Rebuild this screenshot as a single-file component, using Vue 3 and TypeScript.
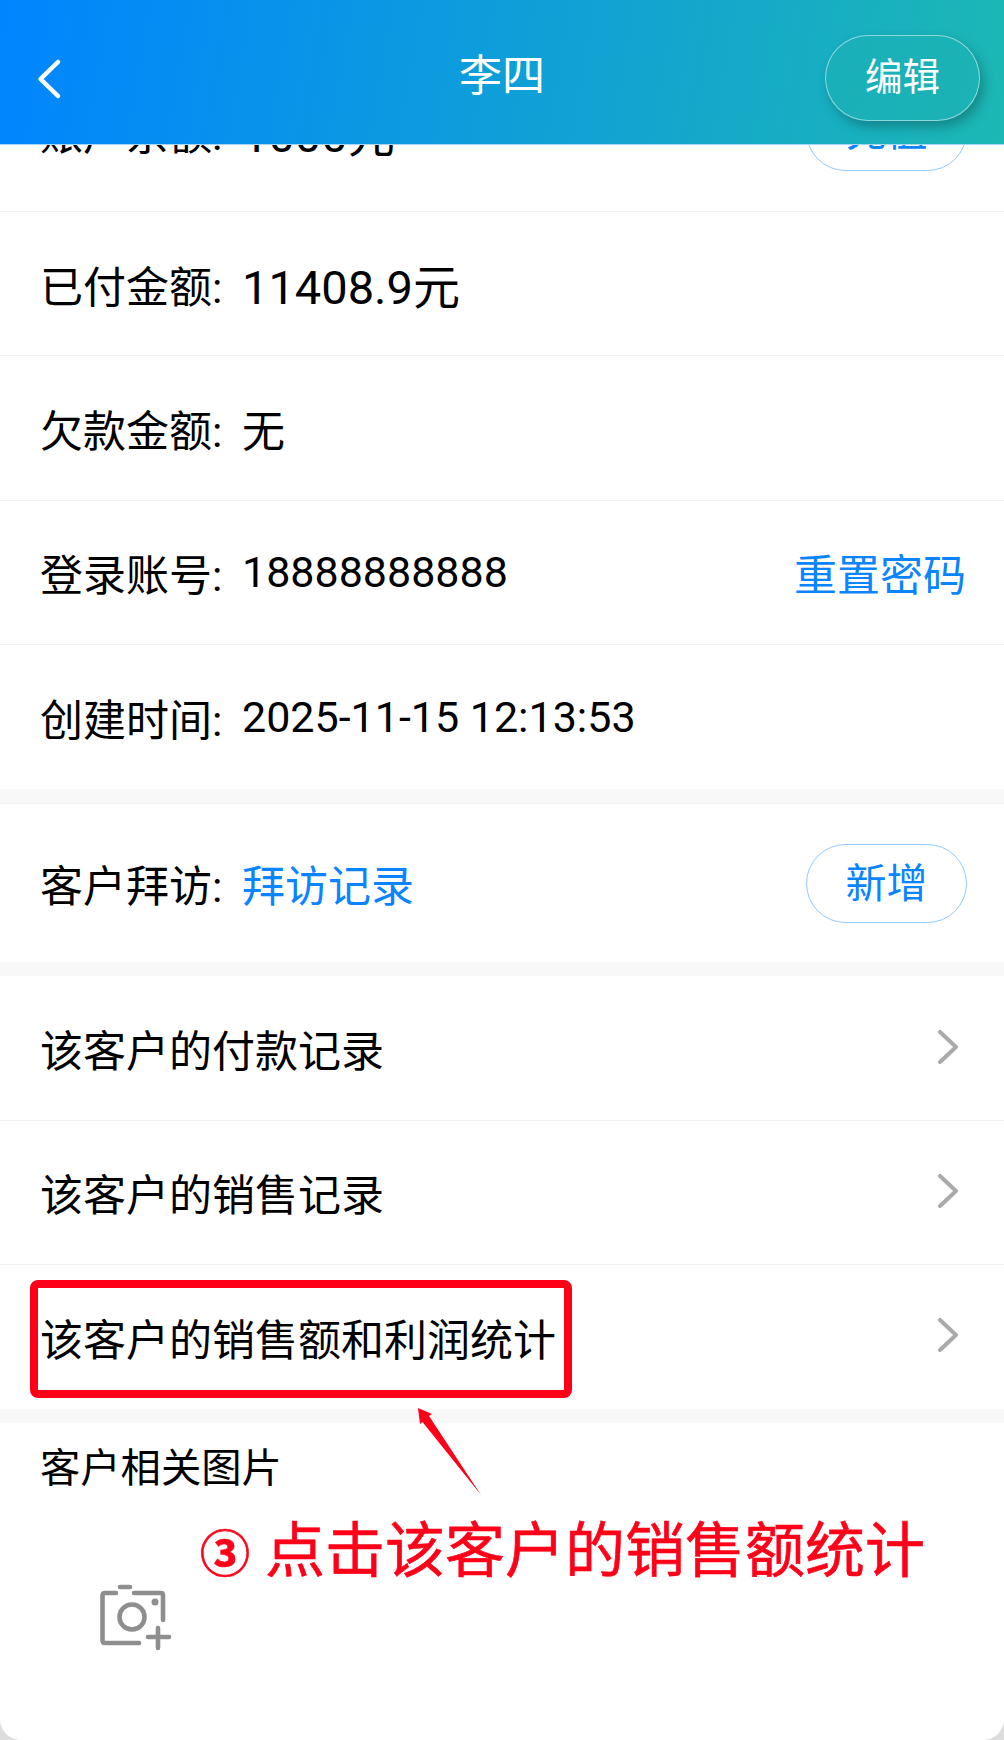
<template>
  <div class="phone">
    <header class="topbar">
      <svg class="back" viewBox="0 0 30 44" width="30" height="44">
        <path d="M24 5 L6.5 22 L24 39" fill="none" stroke="#fff" stroke-width="4.5" stroke-linecap="round" stroke-linejoin="round" />
      </svg>
      <div class="title">李四</div>
      <div class="edit-btn">编辑</div>
    </header>

    <main class="content">
      <section class="group">
        <div class="row" v-for="item in infoRows" :key="item.label">
          <span class="label">{{ item.label }}:</span>
          <span class="value" :class="{ amount: item.amount }">{{ item.value }}</span>
          <span v-if="item.pill" class="pill">{{ item.pill }}</span>
          <span v-if="item.link" class="link">{{ item.link }}</span>
        </div>
      </section>

      <section class="group visit">
        <div class="row">
          <span class="label">客户拜访:</span>
          <span class="value link">拜访记录</span>
          <span class="pill">新增</span>
        </div>
      </section>

      <section class="group">
        <div class="row" v-for="(text, i) in navRows" :key="text">
          <span class="nav-text">{{ text }}</span>
          <svg class="chevron" viewBox="0 0 22 34" width="22" height="34">
            <path d="M3 2 L19 17 L3 32" fill="none" stroke="#aaa" stroke-width="4" stroke-linecap="round" stroke-linejoin="round" />
          </svg>
          <div v-if="i === 2" class="highlight"></div>
        </div>
      </section>

      <section class="pictures">
        <div class="pic-title">客户相关图片</div>
        <svg class="camera" viewBox="0 0 74 68" width="74" height="68">
          <g fill="none" stroke="#8e8e8e" stroke-width="4.6" stroke-linecap="round" stroke-linejoin="round">
            <path d="M18 10 H7 Q4.5 10 4.5 13 V57 Q4.5 60 7 60 H41" />
            <path d="M22 4 H32" />
            <path d="M36 10 H63 Q65 10 65 12 V37" />
            <circle cx="34" cy="34" r="12.5" />
            <path d="M50 54 H71 M60 45 V65" />
          </g>
          <circle cx="57" cy="19" r="3.5" fill="#8e8e8e" />
        </svg>
      </section>
    </main>

    <!-- annotation layer -->
    <svg class="arrow" viewBox="0 0 70 100" width="70" height="100">
      <path d="M1 1 L15 7 L12 9 L64 88 L5.5 15 L3 17 Z" fill="#ff0019" />
    </svg>
    <div class="note"><span class="note-num">③</span> 点击该客户的销售额统计</div>

    <div class="corner left"></div>
    <div class="corner right"></div>
  </div>
</template>

<script setup lang="ts">
interface InfoRow {
  label: string
  value: string
  amount?: boolean
  pill?: string
  link?: string
}

const infoRows: InfoRow[] = [
  { label: '账户余额', value: '1000元', amount: true, pill: '充值' },
  { label: '已付金额', value: '11408.9元', amount: true },
  { label: '欠款金额', value: '无' },
  { label: '登录账号', value: '18888888888', link: '重置密码' },
  { label: '创建时间', value: '2025-11-15 12:13:53' },
]

const navRows = ['该客户的付款记录', '该客户的销售记录', '该客户的销售额和利润统计']
</script>

<style>
body {
  background: #fff;
}
</style>

<style scoped>
.phone {
  position: relative;
  width: 1004px;
  height: 1740px;
  overflow: hidden;
  background: #fff;
  color: #000;
  font-family: Roboto, "Noto Sans CJK SC", sans-serif;
}
.topbar {
  position: absolute;
  left: 0;
  top: 0;
  right: 0;
  z-index: 2;
  height: 145px;
  display: flex;
  align-items: center;
  justify-content: center;
  background: linear-gradient(100deg, #0085ff 0%, #1cb8b4 100%);
  border-bottom: 1px solid #a5d6f7;
  box-sizing: border-box;
}
.back {
  position: absolute;
  left: 34px;
  top: 57px;
}
.title {
  color: #fff;
  font-size: 43px;
}
.edit-btn {
  position: absolute;
  left: 825px;
  top: 35px;
  width: 155px;
  height: 86px;
  box-sizing: border-box;
  padding-bottom: 9px;
  display: flex;
  align-items: center;
  justify-content: center;
  color: #fff;
  font-size: 37.5px;
  border: 1px solid rgba(255, 255, 255, 0.5);
  border-radius: 43px;
  background: rgba(28, 176, 180, 0.6);
  box-shadow: 4px 6px 12px rgba(0, 0, 0, 0.25);
}
.content {
  margin-top: 68px;
}
.group {
  border-bottom: 14px solid #f8f8f8;
}
.row {
  position: relative;
  height: 144.2px;
  box-sizing: border-box;
  padding: 0 37px 0 40px;
  display: flex;
  align-items: center;
  border-bottom: 1px solid #f1f1f1;
  font-size: 43px;
}
.group .row:last-child {
  border-bottom: 0;
}
/* the first row sits partly under the header */
.group:first-child .row:first-child {
  padding-bottom: 17px;
}
.visit .row {
  height: 159.5px;
  border-top: 1px solid #f1f1f1;
}
.label {
  width: 202px;
  flex: none;
}
.value {
  flex: 1;
}
.value.amount {
  font-size: 47px;
}
.link {
  color: #0a84ff;
  margin-right: 1px;
}
.pill {
  width: 161px;
  height: 79px;
  box-sizing: border-box;
  padding-bottom: 6px;
  display: flex;
  align-items: center;
  justify-content: center;
  color: #0a84ff;
  font-size: 41px;
  border: 1px solid #93c9fb;
  border-radius: 40px;
}
.nav-text {
  flex: 1;
}
.chevron {
  margin-right: 8px;
  margin-top: -3px;
}
.highlight {
  position: absolute;
  left: 30px;
  top: 15px;
  width: 542px;
  height: 118px;
  box-sizing: border-box;
  border: 8px solid #ff0019;
  border-radius: 8px;
}
.pictures {
  padding: 18px 40px 0;
}
.pic-title {
  font-size: 40.3px;
  line-height: 56px;
}
.camera {
  display: block;
  margin: 86px 0 0 58px;
}
.arrow {
  position: absolute;
  left: 417px;
  top: 1407px;
}
.note {
  position: absolute;
  left: 200px;
  top: 1512px;
  color: #ff0019;
  font-size: 60px;
  -webkit-text-stroke: 0.6px #ff0019;
  line-height: 80px;
  white-space: nowrap;
}
.note-num {
  font-size: 50px;
  font-weight: 700;
}
.corner {
  position: absolute;
  bottom: 0;
  width: 21px;
  height: 21px;
}
.corner.left {
  left: 0;
  background: radial-gradient(circle at 100% 0, transparent 20.5px, #ddd 21.5px);
}
.corner.right {
  right: 0;
  background: radial-gradient(circle at 0 0, transparent 20.5px, #ddd 21.5px);
}
</style>
